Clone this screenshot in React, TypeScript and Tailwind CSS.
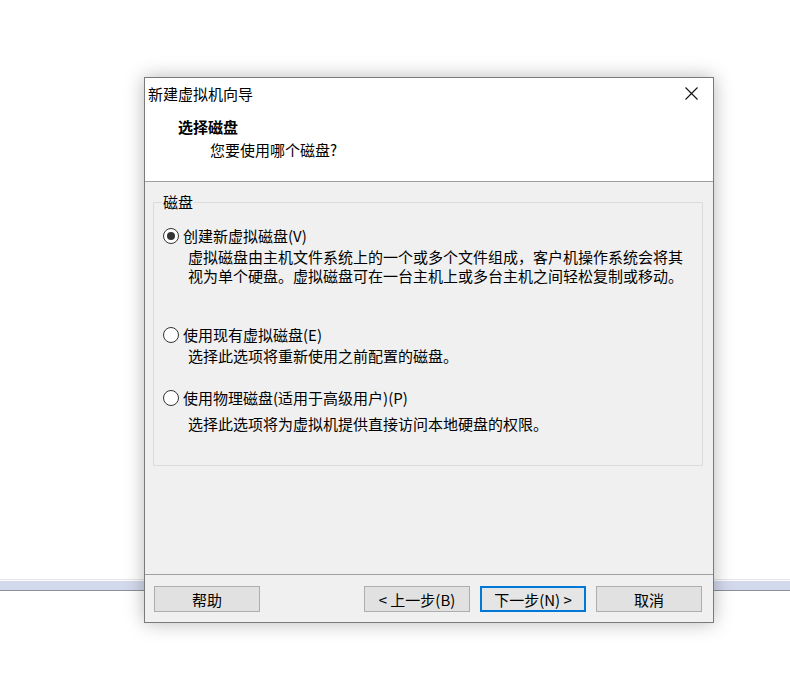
import React from "react";

const font = { fontFamily: '"Noto Sans CJK SC", "Microsoft YaHei", sans-serif' };

function Radio({ checked }: { checked?: boolean }) {
  return (
    <span className="flex h-[16px] w-[16px] shrink-0 items-center justify-center rounded-full border border-[#333333] bg-white">
      {checked && <span className="h-[8px] w-[8px] rounded-full bg-[#333333]" />}
    </span>
  );
}

function Btn({ children, primary }: { children: React.ReactNode; primary?: boolean }) {
  return (
    <button
      className={
        primary
          ? "flex h-[26px] w-[106px] items-center justify-center border-2 border-[#0078d7] bg-[#e5e5e5] text-[15px] leading-[19px] text-black"
          : "flex h-[26px] w-[106px] items-center justify-center border border-[#adadad] bg-[#e1e1e1] text-[15px] leading-[19px] text-black"
      }
    >
      {children}
    </button>
  );
}

function Line({ children }: { children: React.ReactNode }) {
  return <div className="h-[19px] whitespace-nowrap leading-[19px]">{children}</div>;
}

export default function App() {
  return (
    <div className="relative h-[686px] w-[790px] overflow-hidden bg-white" style={font}>
      <div className="pt-[579px]">
        <div className="h-[1px] bg-[#e4e4e4]" />
        <div className="h-[1px] bg-white" />
        <div className="h-[9px] bg-[#d3d9ec]" />
        <div className="h-[1px] bg-[#8c8f99]" />
      </div>

      <div className="absolute left-[144px] top-[77px] flex h-[546px] w-[570px] flex-col border border-[#7a7a7a] bg-[#f0f0f0] text-black shadow-[0_0_18px_rgba(0,0,0,0.28)]">
        <div className="h-[103px] bg-white">
          <div className="flex h-[31px] items-center justify-between pl-[3px] pr-[15px]">
            <span className="text-[15px] leading-[19px]">新建虚拟机向导</span>
            <svg width="13" height="13" viewBox="0 0 13 13">
              <path d="M0.5 0.5 L12.5 12.5 M12.5 0.5 L0.5 12.5" stroke="#111" strokeWidth="1.1" fill="none" />
            </svg>
          </div>
          <div className="pl-[33px] pt-[8px] text-[15px] font-bold leading-[19px]">选择磁盘</div>
          <div className="pl-[65px] pt-[4px] text-[15px] leading-[19px]">您要使用哪个磁盘?</div>
        </div>
        <div className="h-[1px] bg-[#a0a0a0]" />

        <div className="flex h-[392px] flex-col px-[8px] pt-[20px]">
          <div className="relative h-[264px] w-[550px] border border-[#dcdcdc] pl-[9px] pt-[23px] text-[15px] leading-[19px]">
            <span className="absolute left-[8px] top-[-11px] bg-[#f0f0f0] px-[1px] leading-[19px]">磁盘</span>
            <div className="flex h-[19px] items-center gap-[4px]">
              <Radio checked />
              <span>创建新虚拟磁盘(V)</span>
            </div>
            <div className="mt-[2px] pl-[25px]">
              <Line>虚拟磁盘由主机文件系统上的一个或多个文件组成，客户机操作系统会将其</Line>
              <Line>视为单个硬盘。虚拟磁盘可在一台主机上或多台主机之间轻松复制或移动。</Line>
            </div>
            <div className="mt-[40px] flex h-[19px] items-center gap-[4px]">
              <Radio />
              <span>使用现有虚拟磁盘(E)</span>
            </div>
            <div className="mt-[2px] pl-[25px]">
              <Line>选择此选项将重新使用之前配置的磁盘。</Line>
            </div>
            <div className="mt-[23px] flex h-[19px] items-center gap-[4px]">
              <Radio />
              <span>使用物理磁盘(适用于高级用户)(P)</span>
            </div>
            <div className="mt-[7px] pl-[25px]">
              <Line>选择此选项将为虚拟机提供直接访问本地硬盘的权限。</Line>
            </div>
          </div>
        </div>

        <div className="h-[1px] bg-[#a0a0a0]" />
        <div className="flex flex-1 items-start pl-[9px] pr-[11px] pt-[11px]">
          <Btn>帮助</Btn>
          <div className="flex-1" />
          <div className="flex gap-[10px]">
            <Btn>&lt; 上一步(B)</Btn>
            <Btn primary>下一步(N) &gt;</Btn>
            <Btn>取消</Btn>
          </div>
        </div>
      </div>
    </div>
  );
}
